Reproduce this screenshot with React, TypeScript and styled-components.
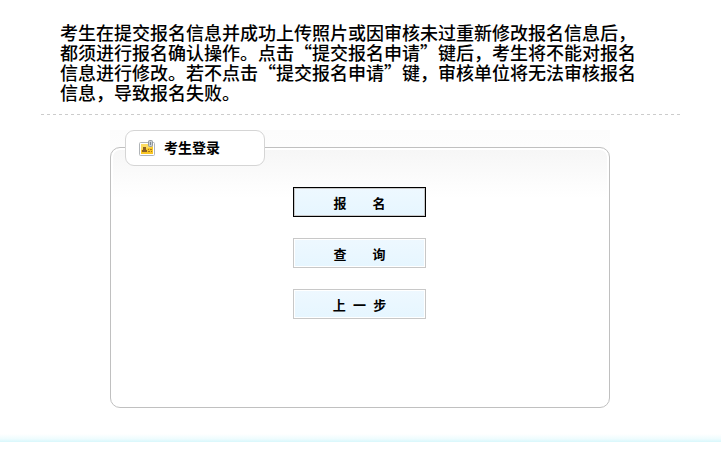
import React from "react";
import styled, { createGlobalStyle } from "styled-components";

const GlobalStyle = createGlobalStyle`
  *, *::before, *::after { box-sizing: border-box; }
  body {
    margin: 0;
    background: #fff;
    color: #000;
    font-family: "Noto Sans CJK SC", "Liberation Sans", sans-serif;
  }
`;

const Page = styled.div`
  display: flex;
  flex-direction: column;
`;

const Content = styled.main`
  padding: 22px 41px 0 40px;
`;

const Notice = styled.p`
  margin: 0;
  padding: 0 32px 12px 20px;
  font-size: 18px;
  line-height: 20px;
  font-weight: 500;
`;

const Divider = styled.div`
  height: 1px;
  margin-left: 1px;
  background: repeating-linear-gradient(90deg, #ccc 0 3px, transparent 3px 6px);
`;

const LoginBox = styled.section`
  position: relative;
  max-width: 500px;
  margin: 15px auto 0;
  padding-top: 17px;
  background: linear-gradient(#fcfcfc, #fdfdfd 17px, #fff 40px);
`;

const Panel = styled.div`
  display: flex;
  flex-direction: column;
  align-items: center;
  gap: 21px;
  padding: 39px 1px 88px 0;
  border: 1px solid #c0c0c0;
  border-radius: 10px;
  background: linear-gradient(#f6f6f6, #fff 50px);
  box-shadow: inset 0 0 0 2px #fff;
`;

const Title = styled.h1`
  position: absolute;
  top: 0;
  left: 15px;
  display: flex;
  align-items: center;
  gap: 9px;
  width: 140px;
  height: 36px;
  margin: 0;
  padding-left: 13px;
  border: 1px solid #d5d5d5;
  border-radius: 9px;
  background: #fff;
  font-size: 14px;
  line-height: 20px;
  font-weight: 700;
`;

const TitleText = styled.span`
  padding-bottom: 2px;
`;

const Action = styled.button<{ $primary?: boolean }>`
  width: 133px;
  height: 30px;
  padding: 4px 0 0;
  border: 1px solid ${(p) => (p.$primary ? "#000" : "#c8c8c8")};
  background: linear-gradient(#eef8ff, #e6f6ff);
  box-shadow: inset 0 0 0 1px ${(p) => (p.$primary ? "#c8c8c8" : "#fff")};
  color: #000;
  font-family: "Liberation Sans", "Noto Sans CJK SC", sans-serif;
  font-size: 13px;
  line-height: 20px;
  font-weight: 700;
  white-space: pre;
  cursor: pointer;
`;

const FooterGlow = styled.div`
  height: 8px;
  margin-top: 26px;
  background: linear-gradient(#fff, #effcfe 60%, #d8f7fc);
`;

const CardIcon = () => (
  <svg width="16" height="16" viewBox="0 0 16 16" aria-hidden="true">
    <rect x="0.5" y="2.5" width="15" height="13" rx="1" fill="#fff" stroke="#b0b4b8" />
    <rect x="2" y="4" width="12" height="10" fill="#f9c623" />
    <path d="M2 4h12v3L2 10z" fill="#fcdc62" />
    <path d="M4 7h3v3h1v2H3v-2h1z" fill="#8a6024" />
    <path d="M9 9.5h1M11 9.5h2M9 11.5h2M12 11.5h1" stroke="#a87720" />
    <rect x="9.5" y="0.5" width="4" height="6" rx="1" fill="#c9ced2" stroke="#949ba1" />
    <path d="M11.5 2v3" stroke="#7d878e" />
  </svg>
);

export default function App() {
  return (
    <>
      <GlobalStyle />
      <Page>
        <Content>
          <Notice>
            考生在提交报名信息并成功上传照片或因审核未过重新修改报名信息后，都须进行报名确认操作。点击“提交报名申请”键后，考生将不能对报名信息进行修改。若不点击“提交报名申请”键，审核单位将无法审核报名信息，导致报名失败。
          </Notice>
          <Divider />
          <LoginBox>
            <Panel>
              <Action type="button" $primary>{"报\u3000\u3000名"}</Action>
              <Action type="button">{"查\u3000\u3000询"}</Action>
              <Action type="button">{"上  一  步"}</Action>
            </Panel>
            <Title>
              <CardIcon />
              <TitleText>考生登录</TitleText>
            </Title>
          </LoginBox>
        </Content>
        <FooterGlow />
      </Page>
    </>
  );
}
